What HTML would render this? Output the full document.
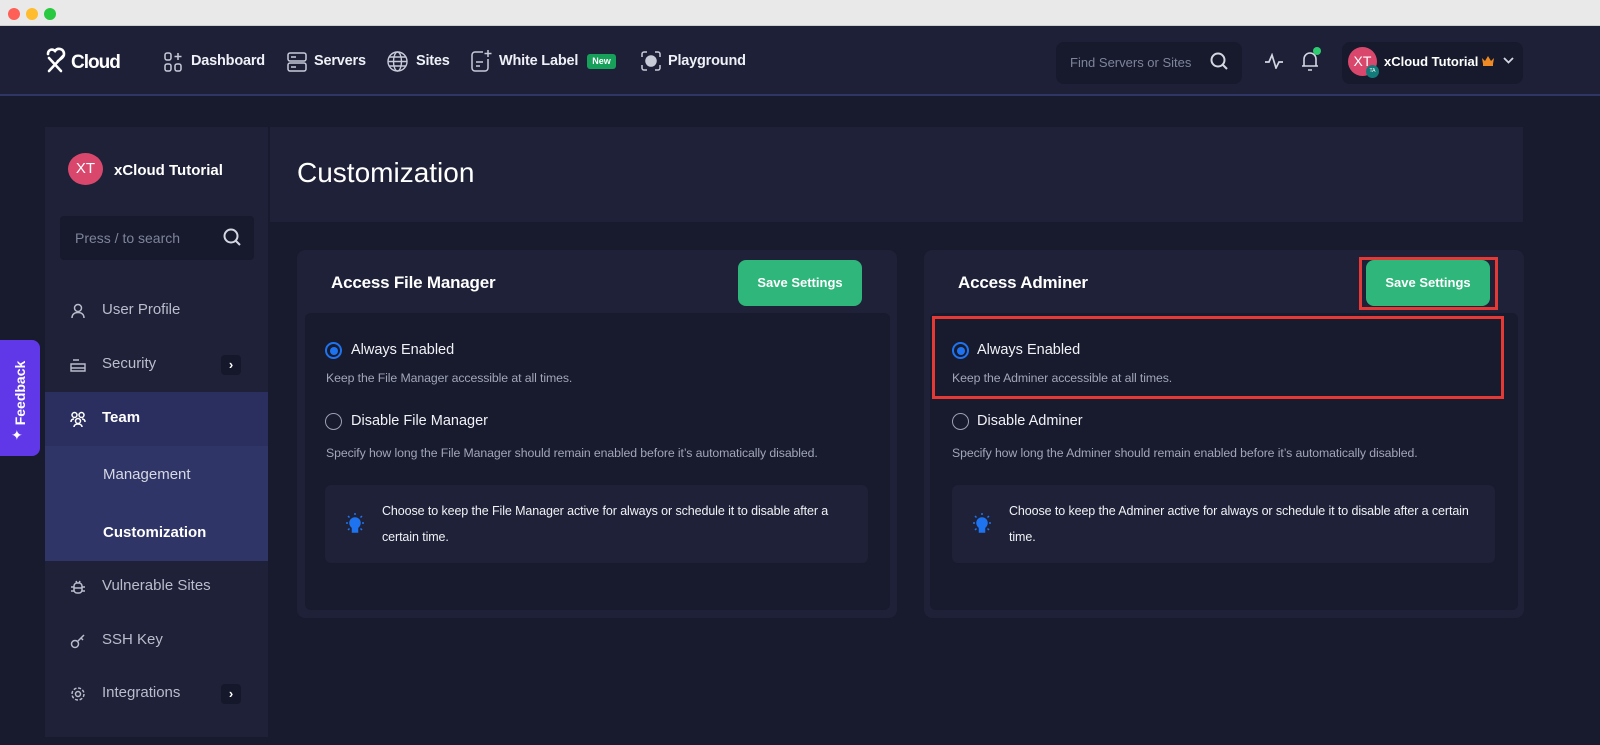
<!DOCTYPE html>
<html><head><meta charset="utf-8"><style>
*{box-sizing:border-box;margin:0;padding:0}
body{width:1600px;height:745px;overflow:hidden;background:#181a2e;font-family:"Liberation Sans",sans-serif;color:#fff;position:relative}
.abs{position:absolute}
.top{left:0;top:0;width:1600px;height:26px;background:#e9e9e9;border-bottom:1px solid #cfcfcf}
.dot{top:8px;width:12px;height:12px;border-radius:50%}
.hdr{left:0;top:26px;width:1600px;height:70px;background:#1d2037;border-bottom:2px solid #2f3565}
.nav{top:53px;font-size:14.5px;font-weight:bold;color:#eef0f6;letter-spacing:-0.2px}
.muted{color:#9ea3b8}
.side{left:45px;top:127px;width:223px;height:610px;background:#1e2137}
.item{left:45px;width:223px;height:54px;font-size:15px;color:#b9bdcc}
.item span{position:absolute;left:57px;top:17px}
.item svg{position:absolute;left:25px;top:19px}
.chev{position:absolute;left:176px;top:17px;width:20px;height:20px;background:#15172a;border-radius:4px;color:#fff;font-size:13px;text-align:center;line-height:20px;font-weight:bold}
.card{top:250px;width:600px;height:368px;background:#1e2137;border-radius:8px}
.inner{position:absolute;left:8px;top:63px;right:7px;bottom:8px;background:#181a2e;border-radius:6px}
.btn{position:absolute;top:10px;width:124px;height:46px;background:#2fb67a;border-radius:8px;font-size:13px;font-weight:bold;text-align:center;line-height:46px}
.ct{position:absolute;left:34px;top:23px;font-size:17px;font-weight:bold;letter-spacing:-0.2px}
.radio{position:absolute;width:17px;height:17px;border-radius:50%;border:1.5px solid #9ba0b4}
.radio.on{border:2px solid #1e74f0}
.radio.on::after{content:"";position:absolute;left:2.5px;top:2.5px;width:8px;height:8px;border-radius:50%;background:#1e74f0}
.lbl{position:absolute;font-size:14.5px;color:#f1f2f6}
.desc{position:absolute;font-size:12.3px;color:#a1a6b8;letter-spacing:-0.1px}
.tip{position:absolute;left:20px;top:172px;width:543px;height:78px;background:#1e2137;border-radius:6px}
.tip p{position:absolute;left:57px;top:13px;width:470px;font-size:12.5px;line-height:26px;color:#f1f2f6;letter-spacing:-0.1px}
.tip svg{position:absolute;left:20px;top:27px}
</style></head><body>
<div class="abs top"></div>
<div class="abs dot" style="left:8px;background:#fe5f57"></div>
<div class="abs dot" style="left:26px;background:#febc2e"></div>
<div class="abs dot" style="left:44px;background:#28c840"></div>
<div class="abs hdr"></div>
<svg class="abs" style="left:44px;top:46px" width="26" height="28" fill="none" stroke="#fff" stroke-width="2.6" stroke-linecap="round"><path d="M4 8c0-4 4-6 7-3 3-4 9-2 9 3 0 3-3 5-6 7M5 25l14-15M5 12l12 13"/></svg>
<div class="abs" style="left:71px;top:52px;font-size:19px;font-weight:bold;letter-spacing:-1px">Cloud</div>
<svg class="abs" style="left:164px;top:52px" width="18" height="20" fill="none" stroke="#c7cbd8" stroke-width="1.5"><rect x="1" y="1" width="6" height="7" rx="2"/><rect x="1" y="12" width="6" height="7" rx="2"/><rect x="11" y="12" width="6" height="7" rx="2"/><path d="M14 1v7M10.5 4.5h7"/></svg>
<div class="abs nav" style="left:191px">Dashboard</div>
<svg class="abs" style="left:287px;top:52px" width="20" height="20" fill="none" stroke="#c7cbd8" stroke-width="1.5"><rect x="1" y="1" width="18" height="8" rx="2"/><rect x="1" y="11" width="18" height="8" rx="2"/><path d="M4 5h5M4 15h5"/></svg>
<div class="abs nav" style="left:314px">Servers</div>
<svg class="abs" style="left:387px;top:51px" width="21" height="21" fill="none" stroke="#c7cbd8" stroke-width="1.4"><circle cx="10.5" cy="10.5" r="9.5"/><ellipse cx="10.5" cy="10.5" rx="4" ry="9.5"/><path d="M1 10.5h19M2.5 6h16M2.5 15h16"/></svg>
<div class="abs nav" style="left:416px">Sites</div>
<svg class="abs" style="left:470px;top:49px" width="22" height="24" fill="none" stroke="#c7cbd8" stroke-width="1.5"><path d="M13 3H5a3 3 0 0 0-3 3v13a3 3 0 0 0 3 3h10a3 3 0 0 0 3-3v-9"/><path d="M18 1v7M14.5 4.5h7M6 13h7M6 17h4"/></svg>
<div class="abs nav" style="left:499px">White Label</div>
<div class="abs" style="left:587px;top:54px;width:29px;height:15px;background:#16a05a;border-radius:3px;font-size:9px;font-weight:bold;text-align:center;line-height:15px">New</div>
<svg class="abs" style="left:641px;top:51px" width="20" height="20" fill="none" stroke="#c7cbd8" stroke-width="1.5"><path d="M1 6V3a2 2 0 0 1 2-2h3M14 1h3a2 2 0 0 1 2 2v3M19 14v3a2 2 0 0 1-2 2h-3M6 19H3a2 2 0 0 1-2-2v-3"/><circle cx="10" cy="10" r="5" fill="#c7cbd8"/></svg>
<div class="abs nav" style="left:668px">Playground</div>
<div class="abs" style="left:1056px;top:42px;width:186px;height:42px;background:#171a2d;border-radius:8px"></div>
<div class="abs muted" style="left:1070px;top:55px;font-size:13px;color:#7e849c">Find Servers or Sites</div>
<svg class="abs" style="left:1210px;top:52px" width="18" height="18" fill="none" stroke="#d4d7e2" stroke-width="2"><circle cx="8" cy="8" r="6.5"/><path d="M13 13l4 4"/></svg>
<svg class="abs" style="left:1264px;top:53px" width="20" height="16" fill="none" stroke="#d4d7e2" stroke-width="1.7"><path d="M1 9h4l3-7 4 13 3-6h4"/></svg>
<svg class="abs" style="left:1300px;top:50px" width="20" height="22" fill="none" stroke="#d4d7e2" stroke-width="1.6"><path d="M4 16V9a6 6 0 0 1 12 0v7M2 16h16M8 20h4"/></svg>
<div class="abs" style="left:1313px;top:47px;width:8px;height:8px;border-radius:50%;background:#2ecc71"></div>
<div class="abs" style="left:1342px;top:42px;width:181px;height:42px;background:#171a2d;border-radius:8px"></div>
<div class="abs" style="left:1348px;top:47px;width:29px;height:29px;border-radius:50%;background:#d9486c;font-size:14px;text-align:center;line-height:29px">XT</div>
<div class="abs" style="left:1366px;top:65px;width:13px;height:13px;border-radius:50%;background:#137a7a;font-size:5px;text-align:center;line-height:13px">TA</div>
<div class="abs" style="left:1384px;top:54px;font-size:13px;font-weight:bold">xCloud Tutorial</div>
<svg class="abs" style="left:1481px;top:55px" width="14" height="11"><path d="M1 3l3 3 3-5 3 5 3-3-1 6H2z" fill="#f08a24"/><rect x="2" y="9" width="10" height="2" fill="#f08a24"/></svg>
<svg class="abs" style="left:1503px;top:57px" width="11" height="8" fill="none" stroke="#d4d7e2" stroke-width="1.8"><path d="M1 1l4.5 4.5L10 1"/></svg>

<div class="abs side"></div>
<div class="abs" style="left:68px;top:153px;width:35px;height:32px;border-radius:50%;background:#d9486c;font-size:15px;text-align:center;line-height:32px">XT</div>
<div class="abs" style="left:114px;top:162px;font-size:15px;font-weight:bold">xCloud Tutorial</div>
<div class="abs" style="left:60px;top:216px;width:194px;height:44px;background:#171a2d;border-radius:4px"></div>
<div class="abs" style="left:75px;top:230px;font-size:14px;color:#7e849c">Press / to search</div>
<svg class="abs" style="left:223px;top:228px" width="19" height="19" fill="none" stroke="#d4d7e2" stroke-width="2"><circle cx="8" cy="8" r="6.5"/><path d="M13 13l4 4"/></svg>

<div class="abs item" style="top:284px"><svg width="16" height="16" fill="none" stroke="#b9bdcc" stroke-width="1.5"><circle cx="8" cy="5" r="3.5"/><path d="M2 15c0-4 3-5.5 6-5.5s6 1.5 6 5.5"/></svg><span>User Profile</span></div>
<div class="abs item" style="top:338px"><svg width="16" height="16" fill="none" stroke="#b9bdcc" stroke-width="1.4"><path d="M3 3h6M1 7h14v4H1zM1 11h14v3H1z"/></svg><span>Security</span><div class="chev">›</div></div>
<div class="abs item" style="top:392px;background:#2a2f5f;color:#fff;font-weight:bold"><svg width="16" height="16" fill="none" stroke="#fff" stroke-width="1.5"><circle cx="4.5" cy="4" r="2.5"/><circle cx="11.5" cy="4" r="2.5"/><circle cx="8" cy="10" r="2.5"/><path d="M1 11c0-2 1-3 3-3M15 11c0-2-1-3-3-3M4 16c0-2 2-3 4-3s4 1 4 3"/></svg><span>Team</span></div>
<div class="abs item" style="top:446px;height:58px;background:#2f3566;color:#d6d9e4"><span style="left:58px;top:20px">Management</span></div>
<div class="abs item" style="top:504px;height:57px;background:#2f3566;color:#fff;font-weight:bold"><span style="left:58px;top:20px">Customization</span></div>
<div class="abs item" style="top:560px"><svg width="16" height="16" fill="none" stroke="#b9bdcc" stroke-width="1.5"><rect x="4" y="4" width="8" height="10" rx="3"/><path d="M6 2l1 2M10 2l-1 2M1 8h3M12 8h3M1 12h3M12 12h3M4 9h8"/></svg><span>Vulnerable Sites</span></div>
<div class="abs item" style="top:614px"><svg width="16" height="16" fill="none" stroke="#b9bdcc" stroke-width="1.5"><circle cx="5" cy="11" r="3.5"/><path d="M7.5 8.5L14 2M11 5l2 2"/></svg><span>SSH Key</span></div>
<div class="abs item" style="top:667px"><svg width="16" height="16" fill="none" stroke="#b9bdcc" stroke-width="1.5"><circle cx="8" cy="8" r="2.5"/><circle cx="8" cy="8" r="6" stroke-dasharray="3 1.7"/></svg><span>Integrations</span><div class="chev">›</div></div>

<div class="abs" style="left:0;top:340px;width:40px;height:116px;background:#6038e8;border-radius:0 8px 8px 0"></div>
<div class="abs" style="left:1px;top:385px;font-size:14px;font-weight:bold;transform:rotate(-90deg);transform-origin:center;width:80px;text-align:center;margin-left:-21px">Feedback</div>
<div class="abs" style="left:11px;top:427px;font-size:14px">✦</div>

<div class="abs" style="left:270px;top:127px;width:1253px;height:95px;background:#1e2137"></div>
<div class="abs" style="left:297px;top:157px;font-size:28px;color:#fff">Customization</div>

<div class="abs card" style="left:297px">
 <div class="ct">Access File Manager</div>
 <div class="btn" style="left:441px">Save Settings</div>
 <div class="inner">
  <div class="radio on" style="left:20px;top:29px"></div>
  <div class="lbl" style="left:46px;top:29px">Always Enabled</div>
  <div class="desc" style="left:21px;top:58px">Keep the File Manager accessible at all times.</div>
  <div class="radio" style="left:20px;top:100px"></div>
  <div class="lbl" style="left:46px;top:100px">Disable File Manager</div>
  <div class="desc" style="left:21px;top:133px">Specify how long the File Manager should remain enabled before it’s automatically disabled.</div>
  <div class="tip"><svg width="20" height="24" fill="none" stroke="#1e74f0" stroke-width="1.5"><circle cx="10" cy="11" r="5" fill="#1e74f0"/><rect x="7.5" y="16" width="5" height="4" fill="#1e74f0"/><path d="M10 1v2M3 4l1.5 1.5M17 4l-1.5 1.5M1 11h2M17 11h2M3 18l1.5-1.5M17 18l-1.5-1.5"/></svg><p>Choose to keep the File Manager active for always or schedule it to disable after a certain time.</p></div>
 </div>
</div>

<div class="abs card" style="left:924px">
 <div class="ct">Access Adminer</div>
 <div class="btn" style="left:442px">Save Settings</div>
 <div class="inner" style="left:6px;right:6px">
  <div class="radio on" style="left:22px;top:29px"></div>
  <div class="lbl" style="left:47px;top:29px">Always Enabled</div>
  <div class="desc" style="left:22px;top:58px">Keep the Adminer accessible at all times.</div>
  <div class="radio" style="left:22px;top:100px"></div>
  <div class="lbl" style="left:47px;top:100px">Disable Adminer</div>
  <div class="desc" style="left:22px;top:133px">Specify how long the Adminer should remain enabled before it’s automatically disabled.</div>
  <div class="tip" style="left:22px"><svg width="20" height="24" fill="none" stroke="#1e74f0" stroke-width="1.5"><circle cx="10" cy="11" r="5" fill="#1e74f0"/><rect x="7.5" y="16" width="5" height="4" fill="#1e74f0"/><path d="M10 1v2M3 4l1.5 1.5M17 4l-1.5 1.5M1 11h2M17 11h2M3 18l1.5-1.5M17 18l-1.5-1.5"/></svg><p>Choose to keep the Adminer active for always or schedule it to disable after a certain time.</p></div>
 </div>
</div>
<div class="abs" style="left:1359px;top:257px;width:139px;height:53px;border:3px solid #e53935"></div>
<div class="abs" style="left:932px;top:316px;width:572px;height:83px;border:3px solid #e53935"></div>
</body></html>
